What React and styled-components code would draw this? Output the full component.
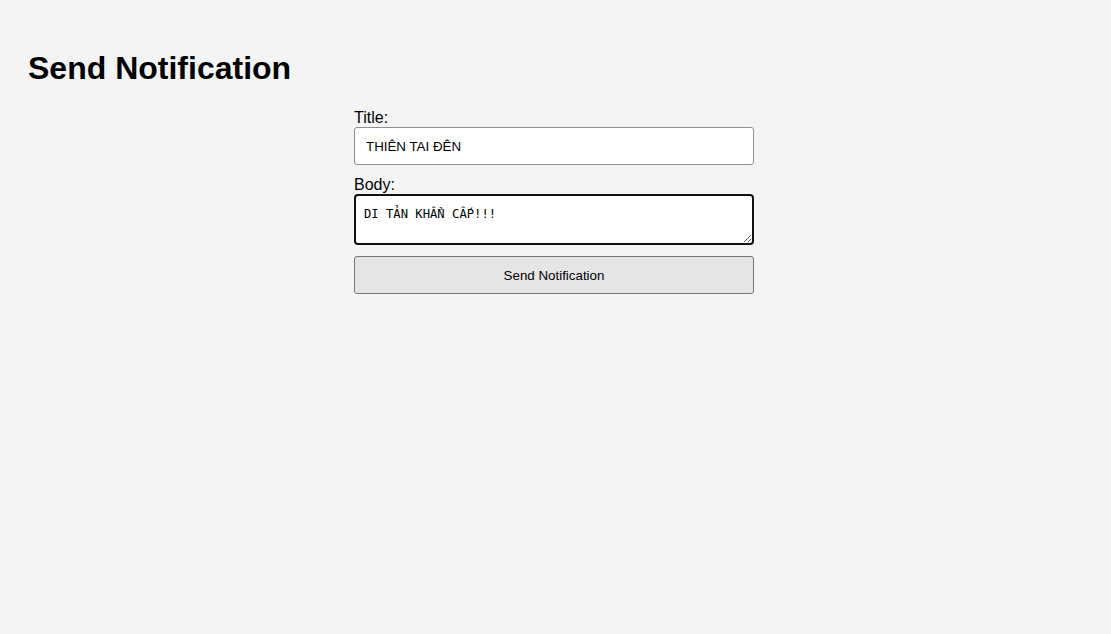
import React, { useState } from 'react';
import styled, { createGlobalStyle } from 'styled-components';

const GlobalStyle = createGlobalStyle`
  body {
    margin: 0;
    padding: 20px 28px;
    background-color: #f4f4f4;
    font-family: "Liberation Sans", Arial, sans-serif;
  }
`;

const Heading = styled.h1`
  font-size: 32px;
  font-weight: bold;
  margin: 30.4px 0 21.4px;
  line-height: 37px;
  color: #000;
`;

const Form = styled.form`
  width: 400px;
  margin: 0 0 0 326px;
  display: flex;
  flex-direction: column;
`;

const Label = styled.label`
  font-size: 16px;
  line-height: 18.4px;
  color: #000;
`;

const Input = styled.input`
  box-sizing: border-box;
  width: 100%;
  height: 38px;
  margin-bottom: 10.6px;
  padding: 10px 11px;
  font-family: "Liberation Sans", Arial, sans-serif;
  font-size: 13.33px;
  color: #000;
  background: #fff;
  border: 1px solid #8f8f8f;
  border-radius: 3px;
  outline: none;
`;

const TextArea = styled.textarea`
  display: block;
  box-sizing: border-box;
  width: 100%;
  height: 51px;
  margin: 0 0 11px;
  padding: 11px 8px 5px;
  font-family: "DejaVu Sans Mono", "Liberation Mono", monospace;
  font-size: 12.2px;
  line-height: 15px;
  color: #000;
  background: #fff;
  border: 2px solid #111;
  border-radius: 4px;
  outline: none;
  resize: vertical;
`;

const Button = styled.button`
  box-sizing: border-box;
  width: 100%;
  height: 38px;
  font-family: "Liberation Sans", Arial, sans-serif;
  font-size: 13.33px;
  color: #000;
  background-color: #e5e5e5;
  border: 1px solid #767676;
  border-radius: 3px;
  cursor: pointer;
`;

export default function App() {
  const [title, setTitle] = useState('THIÊN TAI ĐÊN');
  const [body, setBody] = useState('DI TẢN KHẨN CẤP!!!');

  return (
    <>
      <GlobalStyle />
      <Heading>Send Notification</Heading>
      <Form onSubmit={(e) => e.preventDefault()}>
        <Label htmlFor="title">Title:</Label>
        <Input id="title" value={title} onChange={(e) => setTitle(e.target.value)} />
        <Label htmlFor="body">Body:</Label>
        <TextArea id="body" value={body} onChange={(e) => setBody(e.target.value)} />
        <Button type="submit">Send Notification</Button>
      </Form>
    </>
  );
}
